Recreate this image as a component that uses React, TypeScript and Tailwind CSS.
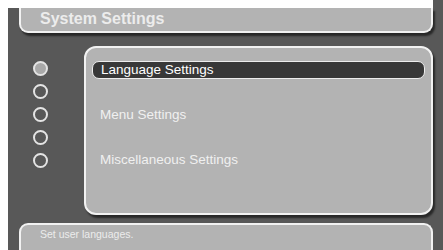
const items = ['Language Settings', 'Menu Settings', 'Miscellaneous Settings']

const App = () => {
    return (
        <div className="flex w-[443px] h-[250px] bg-white overflow-hidden font-['Liberation_Sans',Arial,sans-serif]">
            <div className="w-[8px] shrink-0 bg-white"></div>
            <div className="flex flex-col flex-1 bg-[#585858]">
                <div className="h-[8px] w-[425px] shrink-0 bg-white"></div>

                {/* header */}
                <div className="ml-[11px] w-[414px] h-[25px] shrink-0 bg-[#b3b3b3] border-x-2 border-b-2 border-[#f2f2f2] rounded-b-[9px] shadow-[2px_3px_2px_rgba(0,0,0,0.55)] flex items-center pl-[19px] pb-[2px]">
                    <span className="font-bold text-[16px] leading-none text-[#ececec]">System Settings</span>
                </div>

                <div className="flex mt-[13px] h-[169px] shrink-0">
                    {/* page dots */}
                    <div className="w-[76px] flex flex-col items-center gap-[8px] pt-[15px] pr-[12px]">
                        {[0, 1, 2, 3, 4].map((i) => (
                            <div
                                key={i}
                                className={`w-[15px] h-[15px] rounded-full border-2 border-[#e4e4e4] ${i === 0 ? 'bg-[#a9a9a9]' : 'bg-transparent'}`}
                            ></div>
                        ))}
                    </div>

                    {/* menu panel */}
                    <div className="w-[349px] h-[169px] bg-[#b3b3b3] border-2 border-[#f2f2f2] rounded-[12px] shadow-[2px_3px_2px_rgba(0,0,0,0.55)] pt-[13px] px-[6px] flex flex-col gap-[27px]">
                        {items.map((item, i) => (
                            <div
                                key={item}
                                className={`h-[18px] flex items-center pl-[8px] rounded-[7px] text-[13.5px] leading-none ${i === 0 ? 'bg-[#383838] border border-[#ededed] text-white' : 'text-[#f0f0f0]'}`}
                            >
                                {item}
                            </div>
                        ))}
                    </div>
                </div>

                {/* status bar */}
                <div className="ml-[11px] mt-[8px] w-[414px] h-[40px] shrink-0 bg-[#b3b3b3] border-x-2 border-t-2 border-[#f2f2f2] rounded-t-[9px] pl-[19px] pt-[3px] text-[10.5px] leading-[12px] text-[#ececec]">
                    Set user languages.
                </div>
            </div>
        </div>
    )
}

export default App
